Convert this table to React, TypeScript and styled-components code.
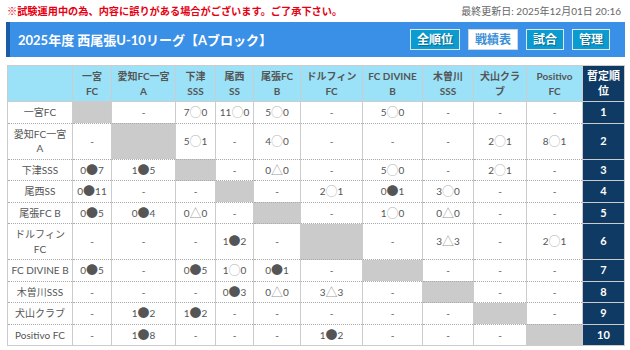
import React from "react";
import styled, { createGlobalStyle } from "styled-components";

const Global = createGlobalStyle`
  html, body { margin: 0; padding: 0; background: #fff; }
  body { font-family: "Lato", "Noto Sans CJK JP", sans-serif; }
`;

const Page = styled.div`
  width: 619px;
  padding: 0 6px;
`;

const TopRow = styled.div`
  display: flex;
  justify-content: space-between;
  align-items: center;
  height: 20px;
  margin-bottom: 2px;
`;

const Notice = styled.span`
  color: #e60012;
  font-size: 10.2px;
  font-weight: 700;
  padding-left: 1px;
`;

const Updated = styled.span`
  color: #666;
  font-size: 10px;
  padding-right: 4px;
`;

const TitleBar = styled.div`
  display: flex;
  justify-content: space-between;
  align-items: center;
  height: 35px;
  background: #3a8fe6;
  border-left: 4px solid #1a5da6;
  padding: 0 15px 0 8px;
`;

const Title = styled.h1`
  margin: 0;
  color: #fff;
  font-size: 13px;
  font-weight: 700;
`;

const Buttons = styled.div`
  display: flex;
  gap: 8px;
`;

const NavButton = styled.button<{ $active?: boolean }>`
  height: 21px;
  padding: 0 6px;
  border: 1px solid ${(p) => (p.$active ? "#cfd8e0" : "#dfe6ea")};
  background: ${(p) => (p.$active ? "#fff" : "#0a9bd0")};
  color: ${(p) => (p.$active ? "#3a8fd6" : "#fff")};
  font-family: "Lato", "Noto Sans CJK JP", sans-serif;
  font-size: 12px;
  font-weight: 700;
  line-height: 19px;
  text-shadow: ${(p) => (p.$active ? "none" : "1px 1px 1px rgba(0,0,0,0.35)")};
  cursor: pointer;
`;

const Table = styled.table`
  margin: 8px 1px 0;
  width: 617px;
  table-layout: fixed;
  border-collapse: collapse;
  border: 1px solid #ccc;
  font-size: 10px;
  color: #555;
`;

const HeadCell = styled.th<{ $rank?: boolean }>`
  background: ${(p) => (p.$rank ? "#0e3a63" : "#9be2f8")};
  color: ${(p) => (p.$rank ? "#fff" : "#555")};
  font-size: ${(p) => (p.$rank ? "11px" : "10px")};
  font-weight: 700;
  line-height: 14.5px;
  padding: 3px 2px;
  border: 1px solid #ccc;
  text-align: center;
  vertical-align: middle;
`;

const NameCell = styled.td<{ $first?: boolean }>`
  text-align: center;
  line-height: 14.5px;
  padding: 3px 2px;
  border-left: 1px solid #ccc;
  border-right: 1px solid #ccc;
  border-top: ${(p) => (p.$first ? "1px solid #ccc" : "1px dotted #aaa")};
  white-space: nowrap;
`;

const Cell = styled.td<{ $self?: boolean; $first?: boolean }>`
  text-align: center;
  line-height: 14.5px;
  padding: 3px 2px;
  background: ${(p) => (p.$self ? "#cbcbcb" : "#fff")};
  border-left: 1px solid #ccc;
  border-right: 1px solid #ccc;
  border-top: ${(p) => (p.$first ? "1px solid #ccc" : "1px dotted #aaa")};
  white-space: nowrap;
`;

const RankCell = styled.td`
  text-align: center;
  line-height: 14.5px;
  padding: 3px 2px;
  background: #0e3a63;
  color: #fff;
  font-size: 11px;
  font-weight: 700;
  border: 1px solid #ccc;
`;

const Mark = styled.span<{ $kind: string }>`
  font-family: "Noto Sans CJK JP", sans-serif;
  font-size: 12px;
  line-height: 1;
  vertical-align: -1px;
  color: ${(p) =>
    p.$kind === "○" ? "#b5b5b5" : p.$kind === "●" ? "#555" : "#999"};
`;

const cols = [65, 39, 64, 40, 38, 47, 62, 60, 51, 53, 56, 42];

const headLabels: string[][] = [
  ["一宮", "FC"],
  ["愛知FC一宮", "A"],
  ["下津", "SSS"],
  ["尾西", "SS"],
  ["尾張FC", "B"],
  ["ドルフィン", "FC"],
  ["FC DIVINE", "B"],
  ["木曽川", "SSS"],
  ["犬山クラ", "ブ"],
  ["Positivo", "FC"],
];

const rows: { name: string[]; results: string[] }[] = [
  { name: ["一宮FC"], results: ["x", "-", "7○0", "11○0", "5○0", "-", "5○0", "-", "-", "-"] },
  { name: ["愛知FC一宮", "A"], results: ["-", "x", "5○1", "-", "4○0", "-", "-", "-", "2○1", "8○1"] },
  { name: ["下津SSS"], results: ["0●7", "1●5", "x", "-", "0△0", "-", "5○0", "-", "2○1", "-"] },
  { name: ["尾西SS"], results: ["0●11", "-", "-", "x", "-", "2○1", "0●1", "3○0", "-", "-"] },
  { name: ["尾張FC B"], results: ["0●5", "0●4", "0△0", "-", "x", "-", "1○0", "0△0", "-", "-"] },
  { name: ["ドルフィン", "FC"], results: ["-", "-", "-", "1●2", "-", "x", "-", "3△3", "-", "2○1"] },
  { name: ["FC DIVINE B"], results: ["0●5", "-", "0●5", "1○0", "0●1", "-", "x", "-", "-", "-"] },
  { name: ["木曽川SSS"], results: ["-", "-", "-", "0●3", "0△0", "3△3", "-", "x", "-", "-"] },
  { name: ["犬山クラブ"], results: ["-", "1●2", "1●2", "-", "-", "-", "-", "-", "x", "-"] },
  { name: ["Positivo FC"], results: ["-", "1●8", "-", "-", "-", "1●2", "-", "-", "-", "x"] },
];

const Lines = ({ parts }: { parts: string[] }) => (
  <>
    {parts.map((p, i) => (
      <React.Fragment key={i}>
        {i > 0 && <br />}
        {p}
      </React.Fragment>
    ))}
  </>
);

const Score = ({ value }: { value: string }) => {
  const m = value.match(/^(\d+)([○●△])(\d+)$/);
  if (!m) return <>{value}</>;
  return (
    <>
      {m[1]}
      <Mark $kind={m[2]}>{m[2]}</Mark>
      {m[3]}
    </>
  );
};

export default function App() {
  return (
    <>
      <Global />
      <Page>
        <TopRow>
          <Notice>※試験運用中の為、内容に誤りがある場合がございます。ご了承下さい。</Notice>
          <Updated>最終更新日: 2025年12月01日 20:16</Updated>
        </TopRow>
        <TitleBar>
          <Title>2025年度 西尾張U-10リーグ【Aブロック】</Title>
          <Buttons>
            <NavButton>全順位</NavButton>
            <NavButton $active>戦績表</NavButton>
            <NavButton>試合</NavButton>
            <NavButton>管理</NavButton>
          </Buttons>
        </TitleBar>
        <Table>
          <colgroup>
            {cols.map((w, i) => (
              <col key={i} style={{ width: w }} />
            ))}
          </colgroup>
          <thead>
            <tr>
              <HeadCell />
              {headLabels.map((l, i) => (
                <HeadCell key={i}>
                  <Lines parts={l} />
                </HeadCell>
              ))}
              <HeadCell $rank>
                <Lines parts={["暫定順", "位"]} />
              </HeadCell>
            </tr>
          </thead>
          <tbody>
            {rows.map((r, ri) => (
              <tr key={ri}>
                <NameCell $first={ri === 0}>
                  <Lines parts={r.name} />
                </NameCell>
                {r.results.map((v, ci) => (
                  <Cell key={ci} $self={v === "x"} $first={ri === 0}>
                    {v === "x" ? null : <Score value={v} />}
                  </Cell>
                ))}
                <RankCell>{ri + 1}</RankCell>
              </tr>
            ))}
          </tbody>
        </Table>
      </Page>
    </>
  );
}
